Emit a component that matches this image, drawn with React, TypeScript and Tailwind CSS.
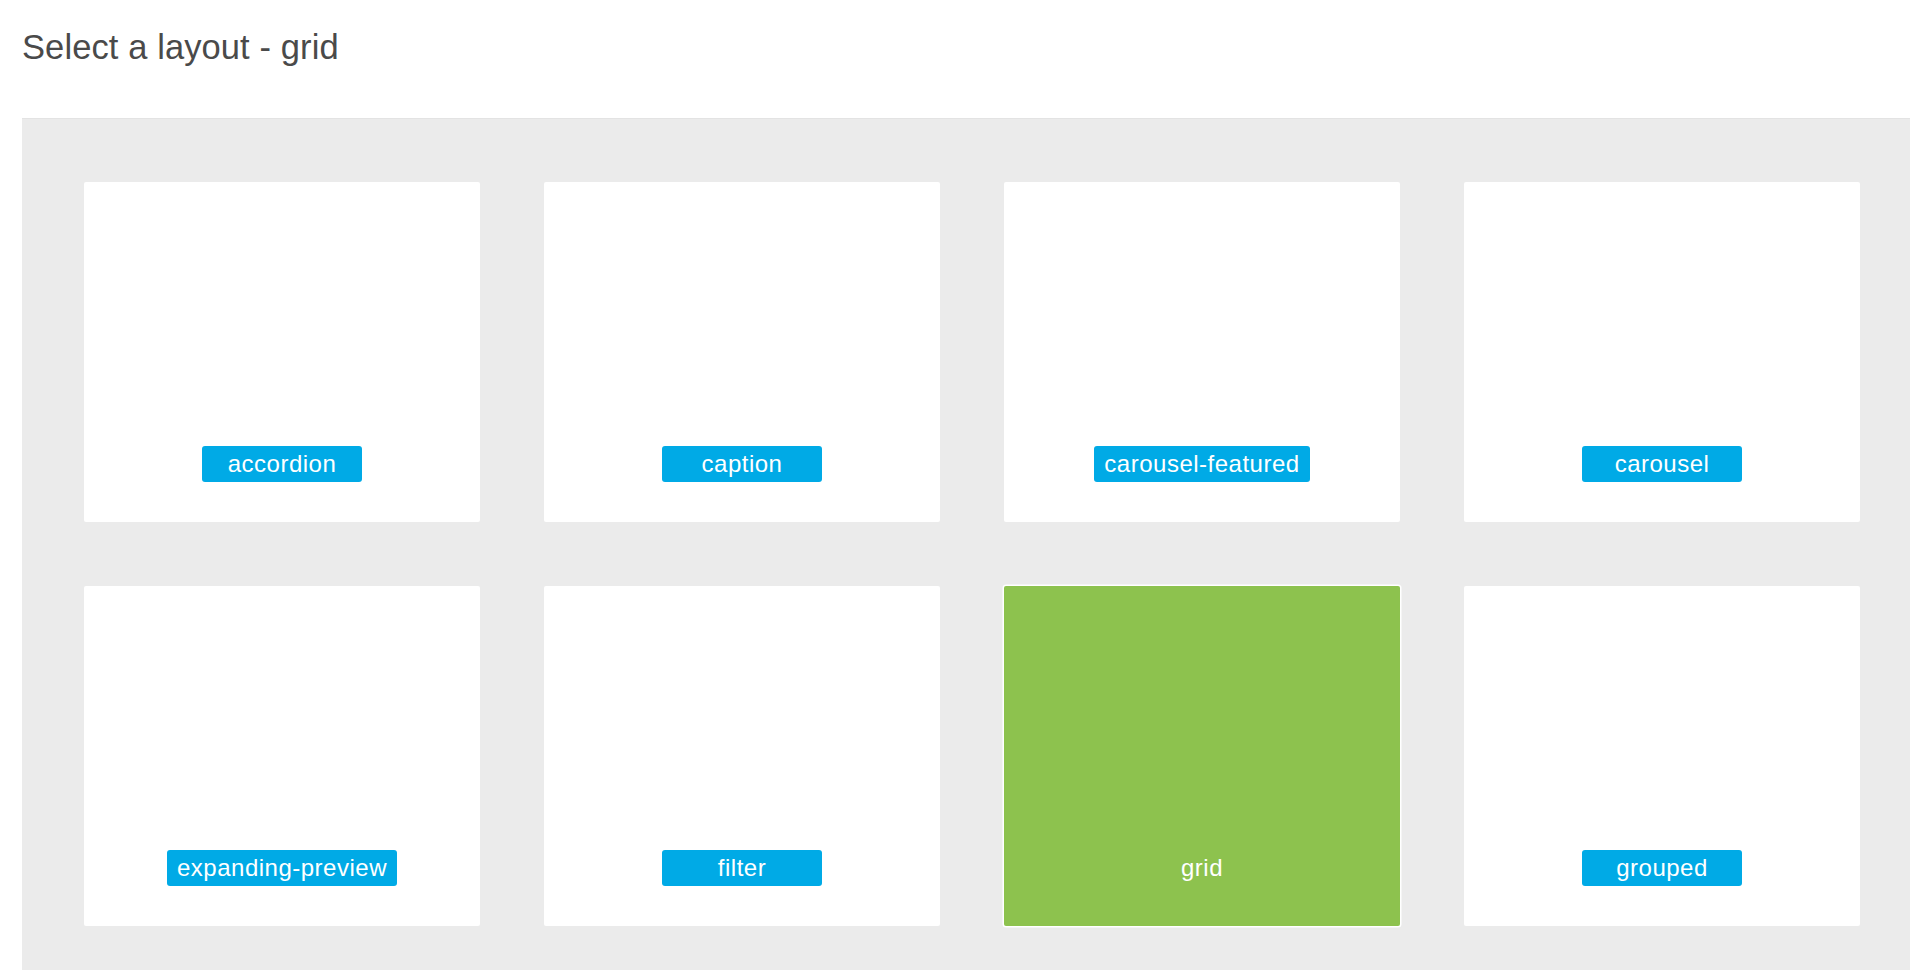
import React from "react";

const layouts = [
  "accordion",
  "caption",
  "carousel-featured",
  "carousel",
  "expanding-preview",
  "filter",
  "grid",
  "grouped",
];

export default function App() {
  const selected = "grid";
  return (
    <div
      className="min-h-[970px] bg-white flex flex-col overflow-hidden"
      style={{ fontFamily: '"Liberation Sans", Arial, Helvetica, sans-serif' }}
    >
      <div className="pl-[22px] pt-[27px]">
        <h1 className="text-[34.5px] leading-[40px] font-light text-[#4a4a4a] tracking-[0.1px]">
          Select a layout - grid
        </h1>
      </div>
      <div className="mt-[51px] ml-[22px] flex-1 bg-[#ebebeb] border-t border-[#e3e3e3] pl-[62px] pt-[63px] pb-[64px]">
        <div className="grid grid-cols-[repeat(4,396px)] gap-x-[64px] gap-y-[64px]">
          {layouts.map((name) => {
            const isSel = name === selected;
            return (
              <div
                key={name}
                className={
                  isSel
                    ? "h-[340px] rounded-[2px] bg-[#8dc24e] shadow-[0_0_0_1.5px_#ffffff] flex flex-col items-center justify-end pb-[40px]"
                    : "h-[340px] rounded-[2px] bg-white flex flex-col items-center justify-end pb-[40px]"
                }
              >
                <div
                  className={
                    isSel
                      ? "h-[36px] min-w-[160px] px-[10px] flex items-center justify-center text-white text-[24px] tracking-[0.5px]"
                      : "h-[36px] min-w-[160px] px-[10px] rounded-[3px] bg-[#00aae6] flex items-center justify-center text-white text-[24px] tracking-[0.5px]"
                  }
                >
                  {name}
                </div>
              </div>
            );
          })}
        </div>
      </div>
    </div>
  );
}
